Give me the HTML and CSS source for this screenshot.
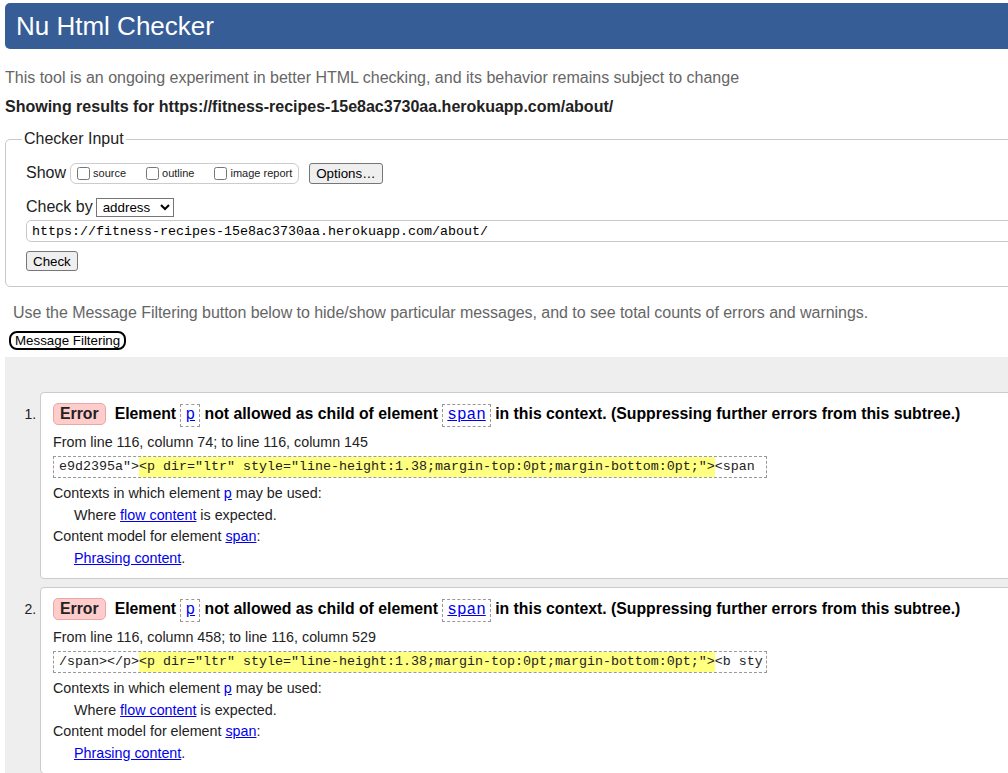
FILE: index.html
```html
<!DOCTYPE html>
<html lang="en">
<head>
<meta charset="utf-8">
<title>Nu Html Checker</title>
<link rel="stylesheet" href="styles.css">
</head>
<body>
<div class="page">
  <h1 class="title">Nu Html Checker</h1>
  <p class="lead">This tool is an ongoing experiment in better HTML checking, and its behavior remains subject to change</p>
  <p class="showing">Showing results for https://fitness-recipes-15e8ac3730aa.herokuapp.com/about/</p>

  <form class="checker">
    <fieldset class="input-set">
      <legend class="legend">Checker Input</legend>
      <div class="row show-row">
        <span class="row-label">Show</span>
        <span class="opts">
          <label class="opt"><input type="checkbox" class="cb">source</label>
          <label class="opt"><input type="checkbox" class="cb">outline</label>
          <label class="opt"><input type="checkbox" class="cb">image report</label>
        </span>
        <button type="button" class="btn options-btn">Options…</button>
      </div>
      <div class="row by-row">
        <span class="row-label">Check by</span>
        <select class="sel"><option>address</option></select>
      </div>
      <input class="url" type="text" value="https://fitness-recipes-15e8ac3730aa.herokuapp.com/about/">
      <div class="submit-row"><button type="button" class="btn check-btn">Check</button></div>
    </fieldset>
  </form>

  <p class="hint">Use the Message Filtering button below to hide/show particular messages, and to see total counts of errors and warnings.</p>
  <button type="button" class="filter-btn">Message Filtering</button>

  <div class="results">
    <ol class="messages">
      <li class="msg">
        <p class="msg-head"><span class="badge">Error</span><span class="msg-text">Element <code class="tag"><a href="#">p</a></code> not allowed as child of element <code class="tag"><a href="#">span</a></code> in this context. (Suppressing further errors from this subtree.)</span></p>
        <p class="loc">From line 116, column 74; to line 116, column 145</p>
        <p class="extract-wrap"><code class="extract">e9d2395a"&gt;<b class="hl">&lt;p dir="ltr" style="line-height:1.38;margin-top:0pt;margin-bottom:0pt;"&gt;</b>&lt;span </code></p>
        <dl class="details">
          <dt>Contexts in which element <a href="#">p</a> may be used:</dt>
          <dd>Where <a href="#">flow content</a> is expected.</dd>
          <dt>Content model for element <a href="#">span</a>:</dt>
          <dd><a href="#">Phrasing content</a>.</dd>
        </dl>
      </li>
      <li class="msg">
        <p class="msg-head"><span class="badge">Error</span><span class="msg-text">Element <code class="tag"><a href="#">p</a></code> not allowed as child of element <code class="tag"><a href="#">span</a></code> in this context. (Suppressing further errors from this subtree.)</span></p>
        <p class="loc">From line 116, column 458; to line 116, column 529</p>
        <p class="extract-wrap"><code class="extract">/span&gt;&lt;/p&gt;<b class="hl">&lt;p dir="ltr" style="line-height:1.38;margin-top:0pt;margin-bottom:0pt;"&gt;</b>&lt;b sty</code></p>
        <dl class="details">
          <dt>Contexts in which element <a href="#">p</a> may be used:</dt>
          <dd>Where <a href="#">flow content</a> is expected.</dd>
          <dt>Content model for element <a href="#">span</a>:</dt>
          <dd><a href="#">Phrasing content</a>.</dd>
        </dl>
      </li>
    </ol>
  </div>
</div>
</body>
</html>
```

FILE: styles.css
```css
html, body {
  margin: 0;
  padding: 0;
  overflow: hidden;
  background: #fff;
}

body {
  font-family: "Liberation Sans", Arial, sans-serif;
  color: #000;
}

.page {
  width: 1080px;
}

.title {
  margin: 3px 0 0 5px;
  height: 46px;
  line-height: 46px;
  padding-left: 11px;
  background: #365d95;
  color: #fff;
  font-size: 26px;
  font-weight: normal;
  border-radius: 5px;
}

.lead {
  margin: 20px 0 0 5px;
  font-size: 16px;
  line-height: 18px;
  color: #666;
}

.showing {
  margin: 11px 0 0 5px;
  font-size: 16px;
  line-height: 18px;
  font-weight: bold;
  color: #222;
}

.checker {
  margin: 14px 0 0 5px;
}

.input-set {
  margin: 0;
  padding: 14px 16px 15px 20px;
  border: 1px solid #c8c8c8;
  border-radius: 5px;
  min-width: 0;
}

.legend {
  padding: 0 2px;
  margin-left: -4px;
  font-size: 16px;
  color: #222;
}

.row {
  display: flex;
  align-items: center;
  font-size: 16px;
  color: #222;
}

.show-row {
  height: 22px;
}

.opts {
  display: flex;
  align-items: center;
  gap: 20px;
  height: 19px;
  margin-left: 4px;
  padding: 0 6px 0 6px;
  border: 1px solid #ccc;
  border-radius: 6px;
}

.opt {
  display: flex;
  align-items: center;
  font-size: 11px;
  color: #222;
}

.cb {
  width: 13px;
  height: 13px;
  margin: 0 3px 0 0;
}

.btn {
  font-family: "Liberation Sans", Arial, sans-serif;
  font-size: 13.33px;
  color: #000;
  background: #efefef;
  border: 1px solid #767676;
  border-radius: 3px;
  padding: 0 6px;
}

.options-btn {
  margin-left: 10px;
  height: 21px;
}

.by-row {
  height: 20px;
  margin-top: 13px;
  gap: 3px;
}

.sel {
  width: 78px;
  height: 19px;
  font-family: "Liberation Sans", Arial, sans-serif;
  font-size: 13.33px;
  color: #000;
  border: 1px solid #767676;
  border-radius: 0;
  background: #fff;
  padding: 0 0 0 2px;
}

.url {
  display: block;
  box-sizing: border-box;
  width: 100%;
  height: 22px;
  margin: 3px 0 0 0;
  padding: 0 5px;
  border: 1px solid #c8c8c8;
  border-radius: 5px;
  font-family: "Liberation Mono", "Courier New", monospace;
  font-size: 13.33px;
  color: #000;
  outline: none;
}

.submit-row {
  margin-top: 9px;
  height: 20px;
  display: flex;
}

.check-btn {
  height: 20px;
}

.hint {
  margin: 17px 0 0 13px;
  font-size: 16px;
  line-height: 18px;
  color: #666;
  letter-spacing: -0.003em;
}

.filter-btn {
  display: block;
  margin: 9px 0 0 9px;
  height: 19px;
  padding: 0 4px;
  font-family: "Liberation Sans", Arial, sans-serif;
  font-size: 13.33px;
  line-height: 15px;
  color: #000;
  background: #fff;
  border: 2px solid #000;
  border-radius: 8px;
}

.results {
  margin: 7px 0 0 5px;
  padding: 35px 0 20px 0;
  background: #eee;
  min-height: 420px;
}

.messages {
  margin: 0;
  padding: 0 0 0 35px;
  font-size: 14px;
  color: #222;
}

.msg {
  background: #fff;
  border: 1px solid #ccc;
  border-radius: 4px;
  padding: 9px 12px 9px 12px;
  margin-bottom: 8px;
}

.msg-head {
  margin: 0 0 5px 0;
  font-size: 15.8px;
  line-height: 23px;
  font-weight: bold;
  color: #000;
}

.badge {
  display: inline-block;
  padding: 0 6px;
  margin-right: 9px;
  line-height: 20px;
  background: #fcc;
  border: 1px solid #e8a8a8;
  border-radius: 5px;
  color: #222;
}

.tag {
  display: inline-block;
  padding: 0 4px;
  line-height: 21px;
  border: 1px dashed #999;
  font-family: "Liberation Mono", "Courier New", monospace;
  font-size: 16px;
  font-weight: normal;
}

a {
  color: #00e;
  text-decoration: underline;
}

.loc {
  margin: 0;
  font-size: 14.3px;
  line-height: 21px;
}

.extract-wrap {
  margin: 3px 0 0 0;
  line-height: 22px;
}

.extract {
  display: inline-block;
  white-space: pre;
  padding: 0 3px 0 5px;
  border: 1px dashed #999;
  font-family: "Liberation Mono", "Courier New", monospace;
  font-size: 13.33px;
  line-height: 20px;
  color: #222;
  vertical-align: top;
}

.hl {
  display: inline-block;
  font-weight: normal;
  background: #ffff80;
  line-height: 20px;
}

.details {
  margin: 5px 0 0 0;
  font-size: 14.3px;
  line-height: 21.5px;
}

.details dt {
  margin: 0;
}

.details dd {
  margin: 0 0 0 21px;
}
```
